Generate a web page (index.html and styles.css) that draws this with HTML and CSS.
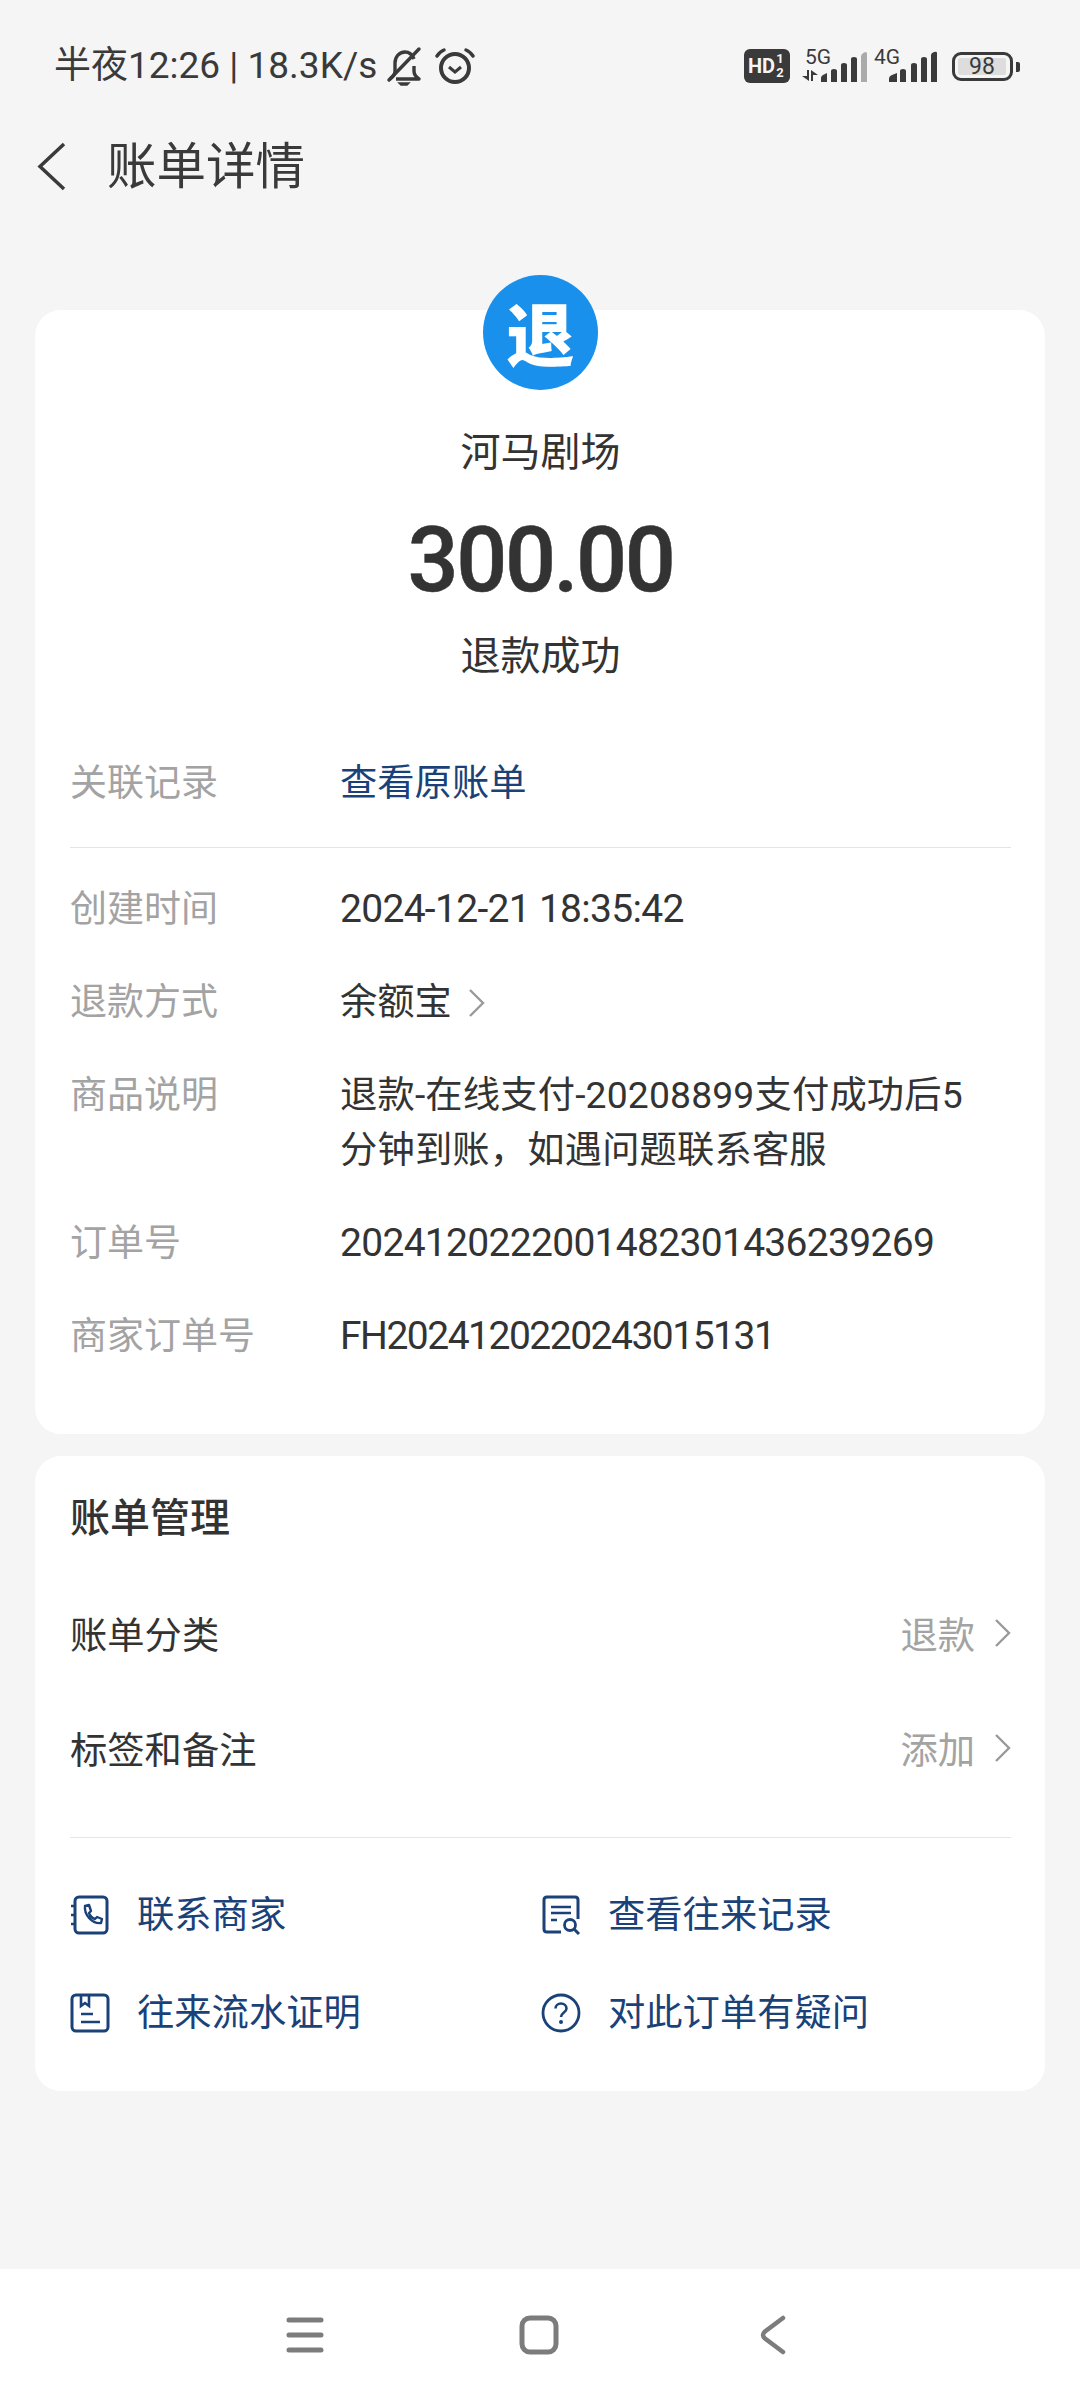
FILE: index.html
```html
<!DOCTYPE html>
<html lang="zh-CN">
<head>
<meta charset="utf-8">
<title>账单详情</title>
<link rel="stylesheet" href="styles.css">
</head>
<body>
<div class="screen">
  <div class="status">
    <div class="status-left">
      <span class="status-text">半夜12:26 | 18.3K/s</span>
      <svg class="ic-bell" viewBox="0 0 36 40" width="36" height="40"><path d="M4 33c3-2 5-4 5-8v-8c0-6 4-11 10-11 4 0 7 2 9 7M28 20v5c0 4 2 6 5 8H10" fill="none" stroke="#3a3a3a" stroke-width="3.400" stroke-linejoin="round"/><path d="M3 34 33 3" stroke="#3a3a3a" stroke-width="3.400" stroke-linecap="round"/><path d="M13 37h10l-2 2h-6z" fill="#3a3a3a" stroke="#3a3a3a" stroke-width="1.500"/></svg>
      <svg class="ic-alarm" viewBox="0 0 40 38" width="40" height="38"><circle cx="20" cy="21" r="14" fill="none" stroke="#3a3a3a" stroke-width="4"/><path d="M14 20l6 5 6-5" fill="none" stroke="#3a3a3a" stroke-width="3"/><path d="M2 9c2-3 4-5 7-6M38 9c-2-3-4-5-7-6" fill="none" stroke="#3a3a3a" stroke-width="3.400" stroke-linecap="round"/></svg>
    </div>
    <div class="status-right">
      <span class="hd"><span class="hd-t">HD</span><span class="hd-f"><span>1</span><span>2</span></span></span>
      <span class="sig sig-five">
        <span class="sig-l">5G</span>
        <svg viewBox="0 0 66 34" width="66" height="34"><g fill="#3a3a3a"><path d="M6 20h2v11l-7-5h5zM10 20l7 5h-5v6h-2z"/><path d="M20 32v-4q0-2 2-3l4-2v9zM30 32V21q0-2 3-2t3 2v11zM40 32V15q0-2 3-2t3 2v17zM50 32V9q0-2 3-2t3 2v23z"/></g><path d="M60 32V6q0-2 3-3.500t3 1.500v28z" fill="#aaa"/></svg>
      </span>
      <span class="sig sig-four">
        <span class="sig-l">4G</span>
        <svg viewBox="0 0 63 34" width="63" height="34"><path d="M15 32v-3q0-3 3-4l5-2v9zM26 32V21q0-2 3-2t3 2v11zM37 32V15q0-2 3-2t3 2v17zM47 32V9q0-2 3-2t3 2v23zM57 32V5q0-2 3-3t3 1v29z" fill="#3a3a3a"/></svg>
      </span>
      <span class="bat"><span class="bat-body"><span class="bat-level">98</span></span><span class="bat-cap"></span></span>
    </div>
  </div>

  <header class="topbar">
    <svg class="back" viewBox="0 0 30 50" width="30" height="50"><path d="M27 2 3 24.500 27 47" fill="none" stroke="#3a3a3a" stroke-width="3.500"/></svg>
    <h1>账单详情</h1>
  </header>

  <main class="content">
    <section class="card card-main">
      <div class="avatar">退</div>
      <div class="merchant">河马剧场</div>
      <div class="amount">300.00</div>
      <div class="state">退款成功</div>
      <div class="row row-link"><span class="lbl">关联记录</span><a class="val link">查看原账单</a></div>
      <div class="rule"></div>
      <div class="details">
        <div class="row"><span class="lbl">创建时间</span><span class="val num">2024-12-21 18:35:42</span></div>
        <div class="row"><span class="lbl">退款方式</span><span class="val">余额宝<svg class="chev" viewBox="0 0 20 32" width="20" height="32"><path d="M3 3l13 13L3 29" fill="none" stroke="#9a9a9a" stroke-width="2.400"/></svg></span></div>
        <div class="row"><span class="lbl">商品说明</span><span class="val desc">退款-在线支付-20208899支付成功后5分钟到账，如遇问题联系客服</span></div>
        <div class="row"><span class="lbl">订单号</span><span class="val num">2024120222001482301436239269</span></div>
        <div class="row"><span class="lbl">商家订单号</span><span class="val num tight">FH2024120220243015131</span></div>
      </div>
    </section>

    <section class="card card-manage">
      <h2>账单管理</h2>
      <div class="mlist">
        <div class="mrow"><span>账单分类</span><span class="mval">退款<svg class="chev" viewBox="0 0 20 32" width="20" height="32"><path d="M3 3l13 13L3 29" fill="none" stroke="#9a9a9a" stroke-width="2.400"/></svg></span></div>
        <div class="mrow"><span>标签和备注</span><span class="mval">添加<svg class="chev" viewBox="0 0 20 32" width="20" height="32"><path d="M3 3l13 13L3 29" fill="none" stroke="#9a9a9a" stroke-width="2.400"/></svg></span></div>
      </div>
      <div class="rule rule2"></div>
      <div class="actions">
        <a class="act"><svg viewBox="0 0 40 40" width="40" height="40"><rect x="5" y="2" width="32" height="36" rx="4" fill="none" stroke="#1a4279" stroke-width="3"/><path d="M1 11h5M1 20h5M1 29h5" stroke="#1a4279" stroke-width="2.400"/><path d="M15 11l4-1 2 6-2 2c1 3 3 5 6 6l2-2 5 2-1 4c-9 1-17-8-16-17z" fill="none" stroke="#1a4279" stroke-width="2.400" stroke-linejoin="round"/></svg>联系商家</a>
        <a class="act"><svg viewBox="0 0 40 40" width="40" height="40"><path d="M20 37H6q-3 0-3-3V5q0-3 3-3h28q3 0 3 3v19" fill="none" stroke="#1a4279" stroke-width="3"/><path d="M10 12h20M10 18h20M10 25h6" stroke="#1a4279" stroke-width="2.600"/><circle cx="29" cy="30" r="5.500" fill="none" stroke="#1a4279" stroke-width="2.800"/><path d="M33 34l5 5" stroke="#1a4279" stroke-width="3"/></svg>查看往来记录</a>
        <a class="act"><svg viewBox="0 0 40 40" width="40" height="40"><rect x="2" y="2" width="36" height="36" rx="4" fill="none" stroke="#1a4279" stroke-width="3"/><path d="M11 2v11l4-3 4 3V2M11 21h12M11 29h19" fill="none" stroke="#1a4279" stroke-width="2.600"/></svg>往来流水证明</a>
        <a class="act"><svg viewBox="0 0 40 40" width="40" height="40"><circle cx="20" cy="20" r="18" fill="none" stroke="#1a4279" stroke-width="2.800"/><path d="M14.500 15.500c0-3 2.500-5 5.500-5s5.500 2 5.500 5c0 4-5.500 4-5.500 8.500" fill="none" stroke="#1a4279" stroke-width="2.600"/><circle cx="20" cy="29" r="2" fill="#1a4279"/></svg>对此订单有疑问</a>
      </div>
    </section>
  </main>

  <nav class="navbar">
    <svg viewBox="0 0 38 36" width="38" height="36"><path d="M3 3h32M3 18h32M3 33h32" stroke="#7c7c7c" stroke-width="5" stroke-linecap="round"/></svg>
    <svg viewBox="0 0 40 40" width="40" height="40"><rect x="3" y="3" width="34" height="34" rx="8" fill="none" stroke="#7c7c7c" stroke-width="5"/></svg>
    <svg class="nav-back" viewBox="0 0 26 40" width="26" height="40"><path d="M23 3 5 16.500q-4 3.500 0 7L23 37" fill="none" stroke="#7c7c7c" stroke-width="4.500" stroke-linecap="round"/></svg>
  </nav>
</div>
</body>
</html>
```
FILE: styles.css
```css
* { box-sizing: border-box; }
html, body { margin: 0; padding: 0; }
body {
  width: 1080px;
  height: 2400px;
  background: #f5f5f5;
  font-family: Roboto, "Noto Sans CJK SC", sans-serif;
  color: #333;
}
.screen { width: 1080px; height: 2400px; display: flex; flex-direction: column; overflow: hidden; }

.status { height: 132px; padding: 44px 60px 0 54px; display: flex; justify-content: space-between; align-items: flex-start; flex: none; }
.status-left { display: flex; align-items: center; height: 44px; color: #3a3a3a; }
.status-text { font-size: 37px; line-height: 44px; white-space: nowrap; }
.ic-bell { margin-left: 9px; }
.ic-alarm { margin-left: 13px; }
.status-right { display: flex; align-items: flex-start; height: 44px; color: #3a3a3a; }
.hd { width: 46px; height: 34px; margin-top: 5px; background: #3a3a3a; border-radius: 6px; color: #f5f5f5; display: flex; align-items: center; padding-left: 4px; font: 700 20px/1 Roboto, sans-serif; }
.hd-f { display: flex; flex-direction: column; font-size: 13px; line-height: 14px; margin-left: 1px; }
.sig { display: block; position: relative; height: 34px; margin-top: 6px; }
.sig svg { display: block; }
.sig-five { width: 66px; margin-left: 11px; }
.sig-four { width: 63px; margin-left: 7px; }
.sig-l { position: absolute; top: -4px; font-size: 21px; line-height: 22px; }
.sig-five .sig-l { left: 4px; }
.sig-four .sig-l { left: 0; }
.bat { display: flex; align-items: center; margin-left: 15px; margin-top: 8px; }
.bat-body { width: 61px; height: 29px; border: 3px solid #3a3a3a; border-radius: 9px; padding: 3px; display: block; }
.bat-level { display: block; width: 48px; height: 17px; background: #ddd; font-size: 23px; line-height: 17px; text-align: center; border-radius: 2px; }
.bat-cap { width: 4px; height: 10px; margin-left: 3px; background: #3a3a3a; border-radius: 0 2px 2px 0; }

.topbar { height: 70px; padding-left: 37px; display: flex; align-items: center; flex: none; }
.topbar h1 { margin: 0 0 0 40px; font-size: 49.500px; font-weight: 400; color: #3a3a3a; line-height: 70px; }

.content { flex: 1; padding: 108px 35px 0 35px; display: flex; flex-direction: column; gap: 22px; }
.card { background: #fff; border-radius: 26px; position: relative; }
.card-main { height: 1124px; padding: 0 34px 0 35px; display: flex; flex-direction: column; }
.avatar { position: absolute; left: 448px; top: -35px; width: 115px; height: 115px; border-radius: 50%; background: #1890ec; color: #fff; font-size: 68px; font-weight: 900; line-height: 113px; text-align: center; font-family: "Noto Sans CJK SC", sans-serif; }
.merchant { margin-top: 115px; text-align: center; font-size: 40px; line-height: 56px; color: #333; }
.amount { margin-top: 30px; text-align: center; font-size: 90px; line-height: 100px; font-weight: 500; letter-spacing: -2.500px; color: #333; -webkit-text-stroke: .5px #333; }
.state { margin-top: 18px; text-align: center; font-size: 40px; line-height: 56px; color: #333; }
.row { display: flex; font-size: 37px; line-height: 55px; }
.lbl { width: 270px; flex: none; color: #a3a3a3; }
.val { color: #333; flex: 1; font-size: 37.300px; }
.num { font-size: 39px; letter-spacing: -.700px; }
.tight { letter-spacing: -1.500px; }
.desc { padding-right: 20px; letter-spacing: .150px; }
.link { color: #1a4279; }
.row-link { margin-top: 71px; }
.rule { height: 1px; background: #e4e4e4; margin-top: 36px; }
.details { display: flex; flex-direction: column; gap: 38px; margin-top: 34px; }
.val .chev { margin-left: 15px; vertical-align: -4px; }

.card-manage { height: 635px; padding: 0 34px 0 35px; }
.card-manage h2 { margin: 0; padding-top: 35px; font-size: 40px; font-weight: 500; line-height: 56px; color: #333; }
.mlist { margin-top: 28px; }
.mrow { display: flex; justify-content: space-between; align-items: center; height: 115px; font-size: 37.300px; color: #333; }
.mval { color: #a3a3a3; display: flex; align-items: center; margin-right: -2px; }
.mval .chev { margin-left: 18px; }
.rule2 { margin-top: 32px; }
.actions { display: grid; grid-template-columns: 471px 1fr; row-gap: 48px; margin-top: 52px; }
.act { display: flex; align-items: center; gap: 27px; font-size: 37.300px; line-height: 50px; color: #1a4279; }

.navbar { height: 131px; background: #fff; flex: none; display: flex; align-items: center; padding: 0 0 0 286px; gap: 195px; }
.nav-back { margin-left: 6px; }
```
